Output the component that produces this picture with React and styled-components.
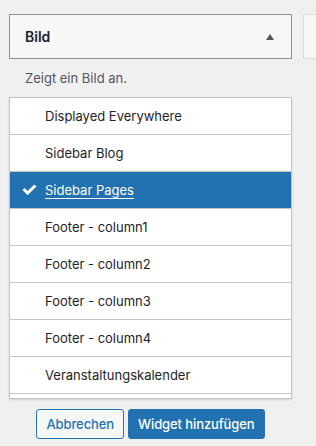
import React from "react";
import styled, { createGlobalStyle } from "styled-components";

const Global = createGlobalStyle`
  html, body { margin: 0; padding: 0; background: #f0f0f1; }
  body { font-family: Inter, "Noto Sans", "Liberation Sans", sans-serif; -webkit-font-smoothing: antialiased; }
`;

const Page = styled.div`
  width: 316px;
  height: 446px;
  overflow: hidden;
  padding: 14px 0 0 9px;
  box-sizing: border-box;
`;

const TopRow = styled.div`
  display: flex;
  gap: 11px;
  width: 340px;
`;

const Header = styled.div`
  width: 283px;
  height: 45px;
  box-sizing: border-box;
  border: 1px solid #8c8f94;
  background: #f6f7f7;
  display: flex;
  align-items: center;
  justify-content: space-between;
  padding: 0 17px 0 15px;
  flex-shrink: 0;
`;

const Title = styled.span`
  font-size: 14px;
  font-weight: 600;
  color: #1d2327;
`;

const Triangle = styled.span`
  width: 0;
  height: 0;
  border-left: 4px solid transparent;
  border-right: 4px solid transparent;
  border-bottom: 6px solid #50575e;
`;

const GhostBox = styled.div`
  flex: 1;
  height: 45px;
  box-sizing: border-box;
  border: 1px solid #dcdcde;
  background: #f6f7f7;
`;

const Desc = styled.p`
  margin: 9px 0 9px 16px;
  font-size: 13px;
  line-height: 20px;
  color: #50575e;
`;

const List = styled.ul`
  list-style: none;
  margin: 0;
  padding: 0;
  width: 283px;
  height: 302px;
  box-sizing: border-box;
  border: 1px solid #c3c4c7;
  background: #fff;
  overflow: hidden;
  box-shadow: 0 1px 2px rgba(0, 0, 0, 0.12);
`;

const Item = styled.li`
  height: 37px;
  box-sizing: border-box;
  border-bottom: 1px solid #c3c4c7;
  display: flex;
  align-items: center;
  padding-left: 35px;
  position: relative;
  font-size: 13px;
  color: ${(p) => (p.$selected ? "#fff" : "#1d2327")};
  background: ${(p) => (p.$selected ? "#2271b1" : "#fff")};
  text-decoration: ${(p) => (p.$selected ? "underline" : "none")};
  text-underline-offset: 3px;
  text-decoration-thickness: 1px;
`;

const Check = styled.svg`
  position: absolute;
  left: 12px;
  top: 50%;
  transform: translateY(-50%);
`;

const Buttons = styled.div`
  width: 283px;
  display: flex;
  justify-content: center;
  gap: 4px;
  margin-top: 10px;
`;

const Button = styled.button`
  height: 30px;
  box-sizing: border-box;
  border-radius: 3px;
  border: 1px solid #2271b1;
  font-family: inherit;
  font-size: 13px;
  line-height: 28px;
  font-weight: 500;
  letter-spacing: -0.1px;
  white-space: nowrap;
  padding: 0 9px;
  background: ${(p) => (p.$primary ? "#2271b1" : "#f6f7f7")};
  color: ${(p) => (p.$primary ? "#fff" : "#2271b1")};
  cursor: pointer;
`;

const items = [
  "Displayed Everywhere",
  "Sidebar Blog",
  "Sidebar Pages",
  "Footer - column1",
  "Footer - column2",
  "Footer - column3",
  "Footer - column4",
  "Veranstaltungskalender",
];

export default function App() {
  return (
    <>
      <Global />
      <Page>
        <TopRow>
          <Header>
            <Title>Bild</Title>
            <Triangle />
          </Header>
          <GhostBox />
        </TopRow>
        <Desc>Zeigt ein Bild an.</Desc>
        <List>
          {items.map((t) => {
            const sel = t === "Sidebar Pages";
            return (
              <Item key={t} $selected={sel}>
                {sel && (
                  <Check width="15" height="11" viewBox="0 0 15 11">
                    <path d="M0.5 5.6 L2.6 3.6 L5.6 6.4 L12.4 0 L14.5 2.1 L5.6 10.8 Z" fill="#fff" />
                  </Check>
                )}
                {t}
              </Item>
            );
          })}
        </List>
        <Buttons>
          <Button>Abbrechen</Button>
          <Button $primary>Widget hinzufügen</Button>
        </Buttons>
      </Page>
    </>
  );
}
